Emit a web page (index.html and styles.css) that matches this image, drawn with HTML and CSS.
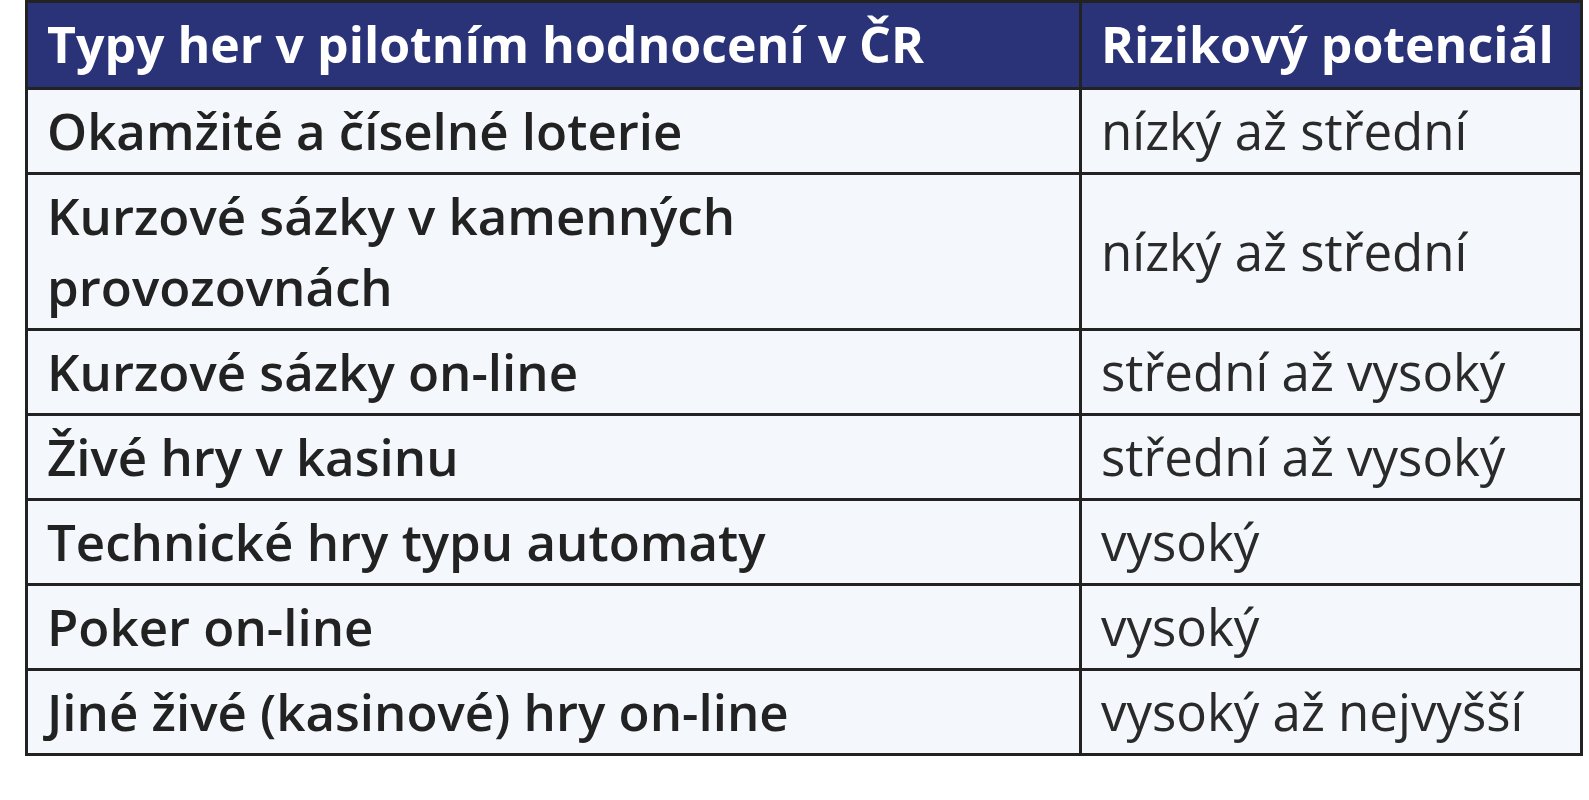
FILE: index.html
```html
<!DOCTYPE html>
<html lang="cs">
<head>
<meta charset="utf-8">
<link rel="stylesheet" href="styles.css">
</head>
<body>
<table class="risk">
  <colgroup><col class="c1"><col class="c2"></colgroup>
  <thead>
    <tr><th>Typy her v pilotním hodnocení v ČR</th><th>Rizikový potenciál</th></tr>
  </thead>
  <tbody>
    <tr><td>Okamžité a číselné loterie</td><td>nízký až střední</td></tr>
    <tr><td>Kurzové sázky v kamenných<br>provozovnách</td><td>nízký až střední</td></tr>
    <tr><td>Kurzové sázky on-line</td><td>střední až vysoký</td></tr>
    <tr><td>Živé hry v kasinu</td><td>střední až vysoký</td></tr>
    <tr><td>Technické hry typu automaty</td><td>vysoký</td></tr>
    <tr><td>Poker on-line</td><td>vysoký</td></tr>
    <tr><td>Jiné živé (kasinové) hry on-line</td><td>vysoký až nejvyšší</td></tr>
  </tbody>
</table>
</body>
</html>
```

FILE: styles.css
```css
html, body {
  margin: 0;
  padding: 0;
  background: #ffffff;
}
body {
  padding-left: 25px;
  font-family: "Open Sans", "Liberation Sans", sans-serif;
}
.risk {
  border-collapse: collapse;
  width: 1555px;
  table-layout: fixed;
  border: 3px solid #222;
}
.c1 { width: 1054px; }
.c2 { width: 501px; }
.risk th, .risk td {
  border: 3px solid #222;
  text-align: left;
  vertical-align: middle;
  padding: 5px 10px 6px 19px;
  line-height: 71px;
  font-size: 51px;
  white-space: nowrap;
}
.risk th {
  background: #2a3377;
  color: #ffffff;
  font-weight: 700;
  font-size: 50px;
  height: 74px;
  padding-top: 4px;
  padding-bottom: 6px;
}
.risk td {
  background: #f4f8fc;
  color: #222;
}
.risk td:first-child {
  font-weight: 600;
}
.risk td:last-child {
  font-weight: 400;
  color: #2a2a2a;
}
```
